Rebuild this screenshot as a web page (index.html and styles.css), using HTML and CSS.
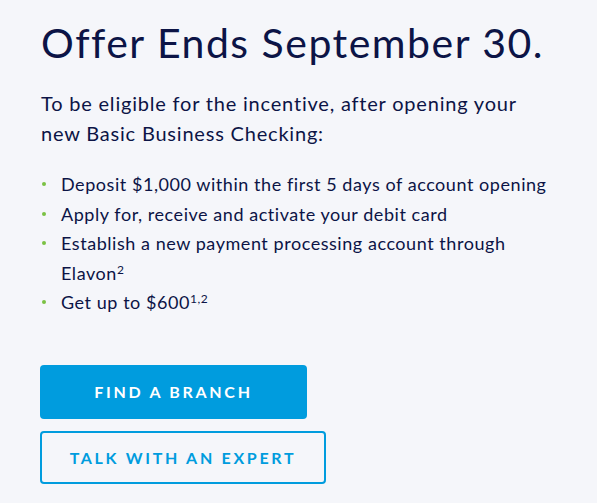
FILE: index.html
```html
<!DOCTYPE html>
<html lang="en">
<head>
<meta charset="utf-8">
<title>Offer</title>
<link rel="stylesheet" href="styles.css">
</head>
<body>
<section class="offer">
  <h1 class="offer-title">Offer Ends September 30.</h1>
  <p class="offer-intro">To be eligible for the incentive, after opening your new Basic Business Checking:</p>
  <ul class="offer-list">
    <li>Deposit $1,000 within the first 5 days of account opening</li>
    <li>Apply for, receive and activate your debit card</li>
    <li>Establish a new payment processing account through Elavon<sup>2</sup></li>
    <li>Get up to $600<sup>1,2</sup></li>
  </ul>
  <div class="offer-actions">
    <a class="btn btn-primary" href="#">FIND A BRANCH</a>
    <a class="btn btn-outline" href="#">TALK WITH AN EXPERT</a>
  </div>
</section>
</body>
</html>
```
FILE: styles.css
```css
html, body {
  margin: 0;
  padding: 0;
  background: #f5f6fa;
}
body {
  font-family: Lato, "Noto Sans", sans-serif;
  color: #0c1446;
}
.offer {
  padding: 18px 20px 0 40px;
}
.offer-title {
  margin: 0;
  padding-left: 1px;
  font-weight: 400;
  font-size: 41px;
  line-height: 50px;
  letter-spacing: 1.5px;
}
.offer-intro {
  margin: 20px 0 0;
  padding-left: 1px;
  font-size: 20px;
  line-height: 30px;
  letter-spacing: 0.8px;
  max-width: 515px;
}
.offer-list {
  margin: 22px 0 0;
  padding: 0 0 0 1px;
  list-style: none;
  font-size: 18px;
  line-height: 29.5px;
  letter-spacing: 0.55px;
  max-width: 515px;
}
.offer-list li {
  position: relative;
  padding-left: 20px;
}
.offer-list li::before {
  content: "";
  position: absolute;
  left: 1px;
  top: 12px;
  width: 4px;
  height: 4px;
  border-radius: 50%;
  background: #7ac143;
}
.offer-list sup {
  font-size: 12px;
  line-height: 0;
  letter-spacing: 0.5px;
  vertical-align: 6px;
}
.offer-actions {
  margin-top: 47px;
  display: flex;
  flex-direction: column;
  align-items: flex-start;
  gap: 12px;
}
.btn {
  display: flex;
  align-items: center;
  justify-content: center;
  box-sizing: border-box;
  height: 54px;
  border-radius: 4px;
  font-weight: 700;
  font-size: 16px;
  letter-spacing: 2.7px;
  text-decoration: none;
}
.btn-primary {
  width: 267px;
  background: #009cde;
  color: #ffffff;
}
.btn-outline {
  width: 286px;
  height: 53px;
  border: 2px solid #009cde;
  color: #009cde;
  background: transparent;
}
```
